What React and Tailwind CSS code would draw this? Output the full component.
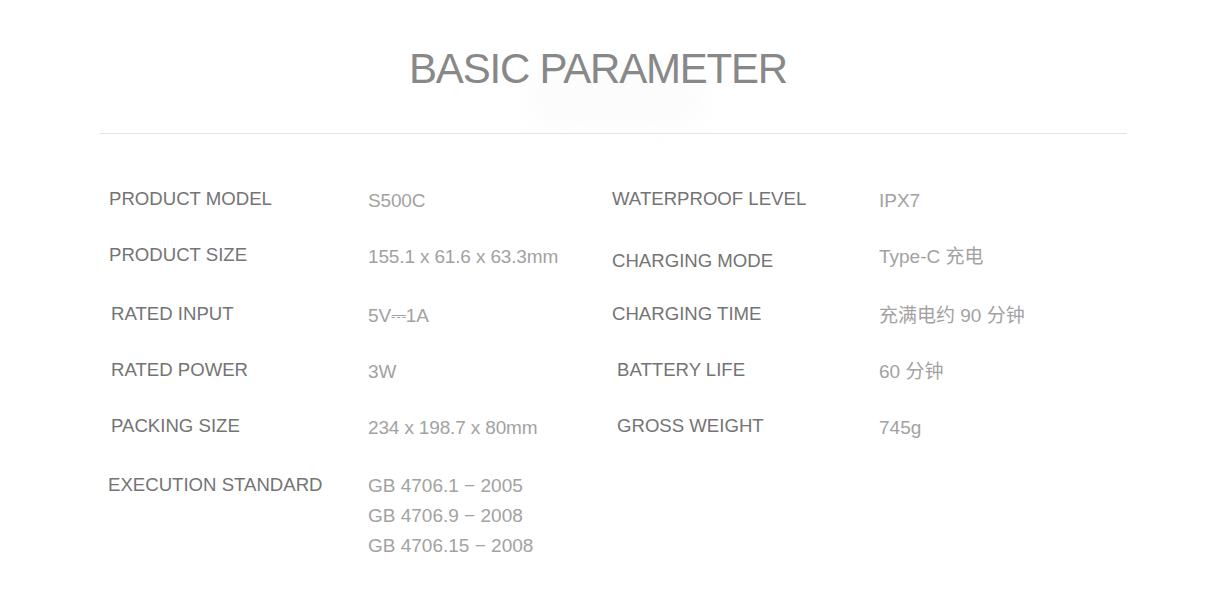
import React from 'react';

const rows = [
  { h: 'h-[56px]', l: 'PRODUCT MODEL', lx: 'pl-0', v: 'S500C', r: 'WATERPROOF LEVEL', rx: 'pl-0', rv: 'IPX7' },
  { h: 'h-[59px]', l: 'PRODUCT SIZE', lx: 'pl-0', v: '155.1 x 61.6 x 63.3mm', r: 'CHARGING MODE', rx: 'pl-0', rv: 'Type-C 充电', rDrop: 'pt-[6px]' },
  { h: 'h-[56px]', l: 'RATED INPUT', lx: 'pl-[2px]', v: '5V⎓1A', r: 'CHARGING TIME', rx: 'pl-0', rv: '充满电约 90 分钟' },
  { h: 'h-[56px]', l: 'RATED POWER', lx: 'pl-[2px]', v: '3W', r: 'BATTERY LIFE', rx: 'pl-[5px]', rv: '60 分钟' },
  { h: 'h-[59px]', l: 'PACKING SIZE', lx: 'pl-[2px]', v: '234 x 198.7 x 80mm', r: 'GROSS WEIGHT', rx: 'pl-[5px]', rv: '745g' },
];

const font = 'font-["Liberation_Sans","Noto_Sans_CJK_SC",sans-serif]';

export default function App() {
  return (
    <div className={`relative w-[1227px] h-[608px] bg-white overflow-hidden ${font}`}>
      {/* faint glow behind the heading */}
      <div className="absolute left-[525px] top-[66px] w-[180px] h-[64px] rounded-full bg-[#fcfcfc] blur-[10px]"></div>

      <div className="relative pt-[43px]">
        <h1 className="text-center pr-[31px] text-[42px] leading-[52px] tracking-[-1.2px] text-[#888888]">
          BASIC PARAMETER
        </h1>
        <div className="mx-[100px] mt-[38px] h-px bg-[#e4e4e4]"></div>

        <div className="pl-[109px] pt-[55px]">
          {rows.map((row) => (
            <div key={row.l} className={`grid grid-cols-[259px_244px_267px_1fr] items-start ${row.h}`}>
              <div className={`text-[18.6px] leading-[20px] text-[#747474] ${row.lx}`}>{row.l}</div>
              <div className="text-[19px] leading-[20px] text-[#a2a2a2] pt-[2px] tracking-[-0.15px]">{row.v}</div>
              <div className={`text-[18.6px] leading-[20px] text-[#747474] ${row.rx} ${row.rDrop || ''}`}>{row.r}</div>
              <div className="text-[19px] leading-[20px] text-[#a2a2a2] pt-[2px]">{row.rv}</div>
            </div>
          ))}

          <div className="grid grid-cols-[259px_244px_267px_1fr] items-start">
            <div className="text-[18.6px] leading-[20px] text-[#747474] -ml-[1px]">EXECUTION STANDARD</div>
            <div className="flex flex-col text-[19px] leading-[30px] -mt-[4px] text-[#a2a2a2]">
              <span>GB 4706.1 − 2005</span>
              <span>GB 4706.9 − 2008</span>
              <span>GB 4706.15 − 2008</span>
            </div>
          </div>
        </div>
      </div>
    </div>
  );
}
